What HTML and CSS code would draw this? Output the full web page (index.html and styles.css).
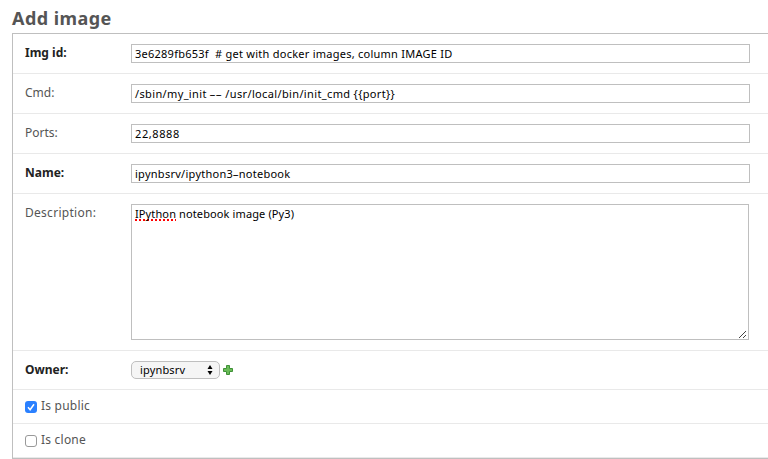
FILE: index.html
```html
<!DOCTYPE html>
<html lang="en">
<head>
<meta charset="utf-8">
<title>Add image</title>
<link rel="stylesheet" href="styles.css">
</head>
<body>
<main>
  <h1>Add image</h1>
  <form class="module">
    <div class="row"><label class="required">Img id:</label><div class="field v-img" role="textbox">3e6289fb653f&nbsp; # get with docker images, column IMAGE ID</div></div>
    <div class="row"><label>Cmd:</label><div class="field v-cmd" role="textbox">/sbin/my_init <span class="dash double">--</span> /usr/local/bin/init_cmd {{port}}</div></div>
    <div class="row"><label>Ports:</label><div class="field v-ports" role="textbox">22,8888</div></div>
    <div class="row"><label class="required">Name:</label><div class="field v-name" role="textbox">ipynbsrv/ipython3<span class="dash">-</span>notebook</div></div>
    <div class="row row-area"><label class="t-desc">Description:</label><div class="field area v-desc" role="textbox"><span class="misspelt">IPython</span> notebook image (Py3)<svg class="grip" width="8" height="8" viewBox="0 0 8 8" shape-rendering="crispEdges"><path d="M0 7h1v1H0zM1 6h1v1H1zM2 5h1v1H2zM3 4h1v1H3zM4 3h1v1H4zM5 2h1v1H5zM6 1h1v1H6zM4 7h1v1H4zM5 6h1v1H5zM6 5h1v1H6z" fill="#444"/></svg></div></div>
    <div class="row row-owner"><label class="required t-owner">Owner:</label><div class="owner"><div class="select"><span class="v-owner">ipynbsrv</span><svg width="6" height="10" viewBox="0 0 6 10"><path d="M3 0 5.5 4h-5zM3 10 .5 6h5z"/></svg></div><svg class="plus" width="10" height="10" viewBox="0 0 10 10"><path d="M3.5.5h3v3h3v3h-3v3h-3v-3h-3v-3h3z" fill="#6abb58" stroke="#3f9136"/></svg></div></div>
    <div class="row row-check"><span class="box checked"><svg width="12" height="12" viewBox="0 0 12 12"><path d="M3 6.3 5.1 8.7 9 3.2" fill="none" stroke="#fff" stroke-width="1.5"/></svg></span><label class="t-check">Is public</label></div>
    <div class="row row-check"><span class="box"></span><label class="t-check">Is clone</label></div>
  </form>
</main>
</body>
</html>
```
FILE: styles.css
```css
* { box-sizing: border-box; }
body { margin: 0; background: #fff; color: #555; font: 12px/16px "Noto Sans", "Open Sans", sans-serif; overflow: hidden; white-space: nowrap; }
main { padding: 7px 0 0 12px; }
h1 { margin: 0 0 4px; font-size: 18px; line-height: 22px; font-weight: 700; letter-spacing: .45px; }
.module { width: 770px; border: 1px solid #bfbfbf; }
.row { display: grid; grid-template-columns: 106px 619px; align-items: start; height: 40px; padding: 10px 0 0 12px; border-bottom: 1px solid #e9e9e9; }
.row > label { margin-top: 1px; }
.required { font-weight: 700; color: #222; }
.field { height: 19px; padding: 1px 3px; border: 1px solid #bfbfbf; color: #000; font-size: 11px; line-height: 15px; }
.v-img { letter-spacing: .25px; }
.v-cmd { letter-spacing: .36px; }
.v-ports { letter-spacing: .6px; }
.v-name { letter-spacing: .27px; }
.v-desc { letter-spacing: .12px; }
.v-owner { letter-spacing: .15px; }
.t-desc { letter-spacing: .28px; }
.t-check { letter-spacing: .22px; }
.dash { display: inline-block; margin: 0 1px; letter-spacing: 0; transform: scaleX(1.8); }
.dash.double { margin: 0 2.5px; }
.row-area { height: 157px; }
.area { position: relative; width: 618px; height: 136px; }
.misspelt { text-decoration: underline dotted #f00 1.5px; text-underline-offset: 1px; text-decoration-skip-ink: none; }
.grip { position: absolute; right: 1px; bottom: 1px; }
.row-owner { height: 39px; }
.owner { display: flex; align-items: center; gap: 3px; }
.select { display: flex; align-items: center; justify-content: space-between; width: 89px; height: 18px; padding: 0 6px 0 8px; border: 1px solid #bfbfbf; border-radius: 5px; background: #f5f5f5; color: #000; font-size: 11px; }
.row-check { display: flex; height: 34px; padding-top: 7px; gap: 4px; }
.box { width: 12px; height: 12px; margin-top: 4px; border: 1px solid #999; border-radius: 3px; background: #fff; }
.box.checked { border: 0; background: #2a80ff; }
.box svg { display: block; }
```
